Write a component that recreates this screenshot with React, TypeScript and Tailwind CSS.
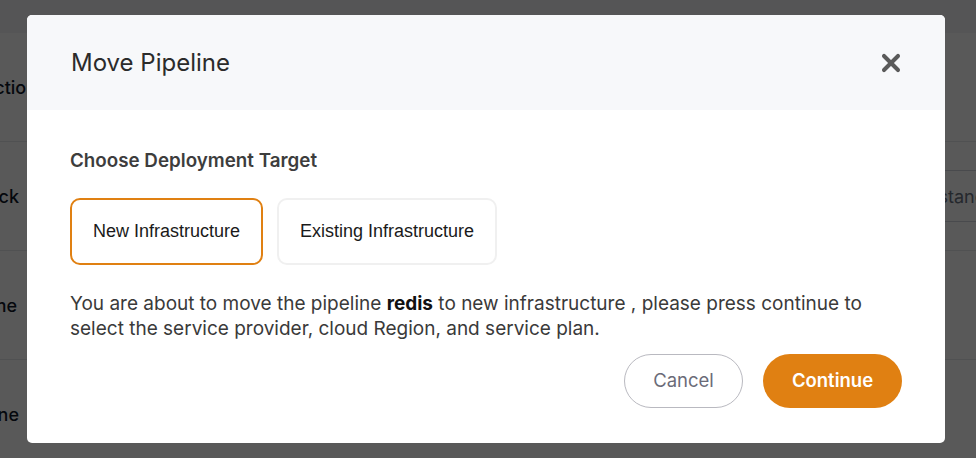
import { X } from "lucide-react";

const rows = [
  { label: "Connection", w: "w-[37px]" },
  { label: "Stack", w: "w-[19px]" },
  { label: "Pipeline Name", w: "w-[17px]" },
  { label: "Runtime Engine", w: "w-[19px]" },
];

export default function App() {
  return (
    <div className="relative h-[458px] w-[976px] overflow-hidden bg-white font-['Inter',sans-serif]">
      {/* page behind the overlay */}
      <div className="flex h-full flex-col">
        <div className="h-[33px] shrink-0 bg-gray-100" />
        {rows.map((r, i) => (
          <div
            key={r.label}
            className="flex h-[109px] shrink-0 items-center justify-between border-b border-gray-200 text-[18px] font-medium text-gray-900"
          >
            <div className={`flex justify-end whitespace-nowrap ${r.w}`}>{r.label}</div>
            {i === 1 && (
              <div className="mr-[-60px] flex h-[52px] w-[120px] items-center border border-gray-300 pl-[6px] text-[18px] font-normal text-gray-500">
                Instance
              </div>
            )}
          </div>
        ))}
      </div>

      {/* overlay */}
      <div className="absolute inset-0 bg-black/65" />

      {/* modal */}
      <div className="absolute left-[27px] top-[15px] w-[918px] overflow-hidden rounded-[5px] bg-white">
        <div className="flex h-[95px] items-center justify-between bg-[#f7f8fa] pl-[44px] pr-[40px]">
          <h2 className="text-[24px] text-[#2b2b2b]">Move Pipeline</h2>
          <X className="h-[28px] w-[28px] text-[#5a5a5a]" strokeWidth={3.5} />
        </div>

        <div className="px-[43px] pb-[35px] pt-[37px]">
          <p className="text-[18.8px] font-semibold text-[#3d3d3d]">Choose Deployment Target</p>

          <div className="mt-[23px] flex gap-[14px] font-['Liberation_Sans',Arial,sans-serif] text-[18px] text-[#1a1a1a]">
            <button className="h-[67px] w-[193px] rounded-[10px] border-2 border-[#e08012] bg-white">
              New Infrastructure
            </button>
            <button className="h-[67px] w-[220px] rounded-[10px] border-2 border-[#f0f0f0] bg-white">
              Existing Infrastructure
            </button>
          </div>

          <p className="mt-[26px] text-[19px] leading-[25px] text-[#3a3a3a]">
            You are about to move the pipeline <b className="text-[#111]">redis</b> to new infrastructure , please
            press continue to select the service provider, cloud Region, and service plan.
          </p>

          <div className="mt-[13px] flex justify-end gap-[20px]">
            <button className="h-[54px] w-[119px] rounded-full border border-[#b9b9c0] text-[18.5px] text-[#6b6b78]">
              Cancel
            </button>
            <button className="h-[54px] w-[139px] rounded-full bg-[#e08012] text-[18.5px] font-semibold text-white">
              Continue
            </button>
          </div>
        </div>
      </div>
    </div>
  );
}
